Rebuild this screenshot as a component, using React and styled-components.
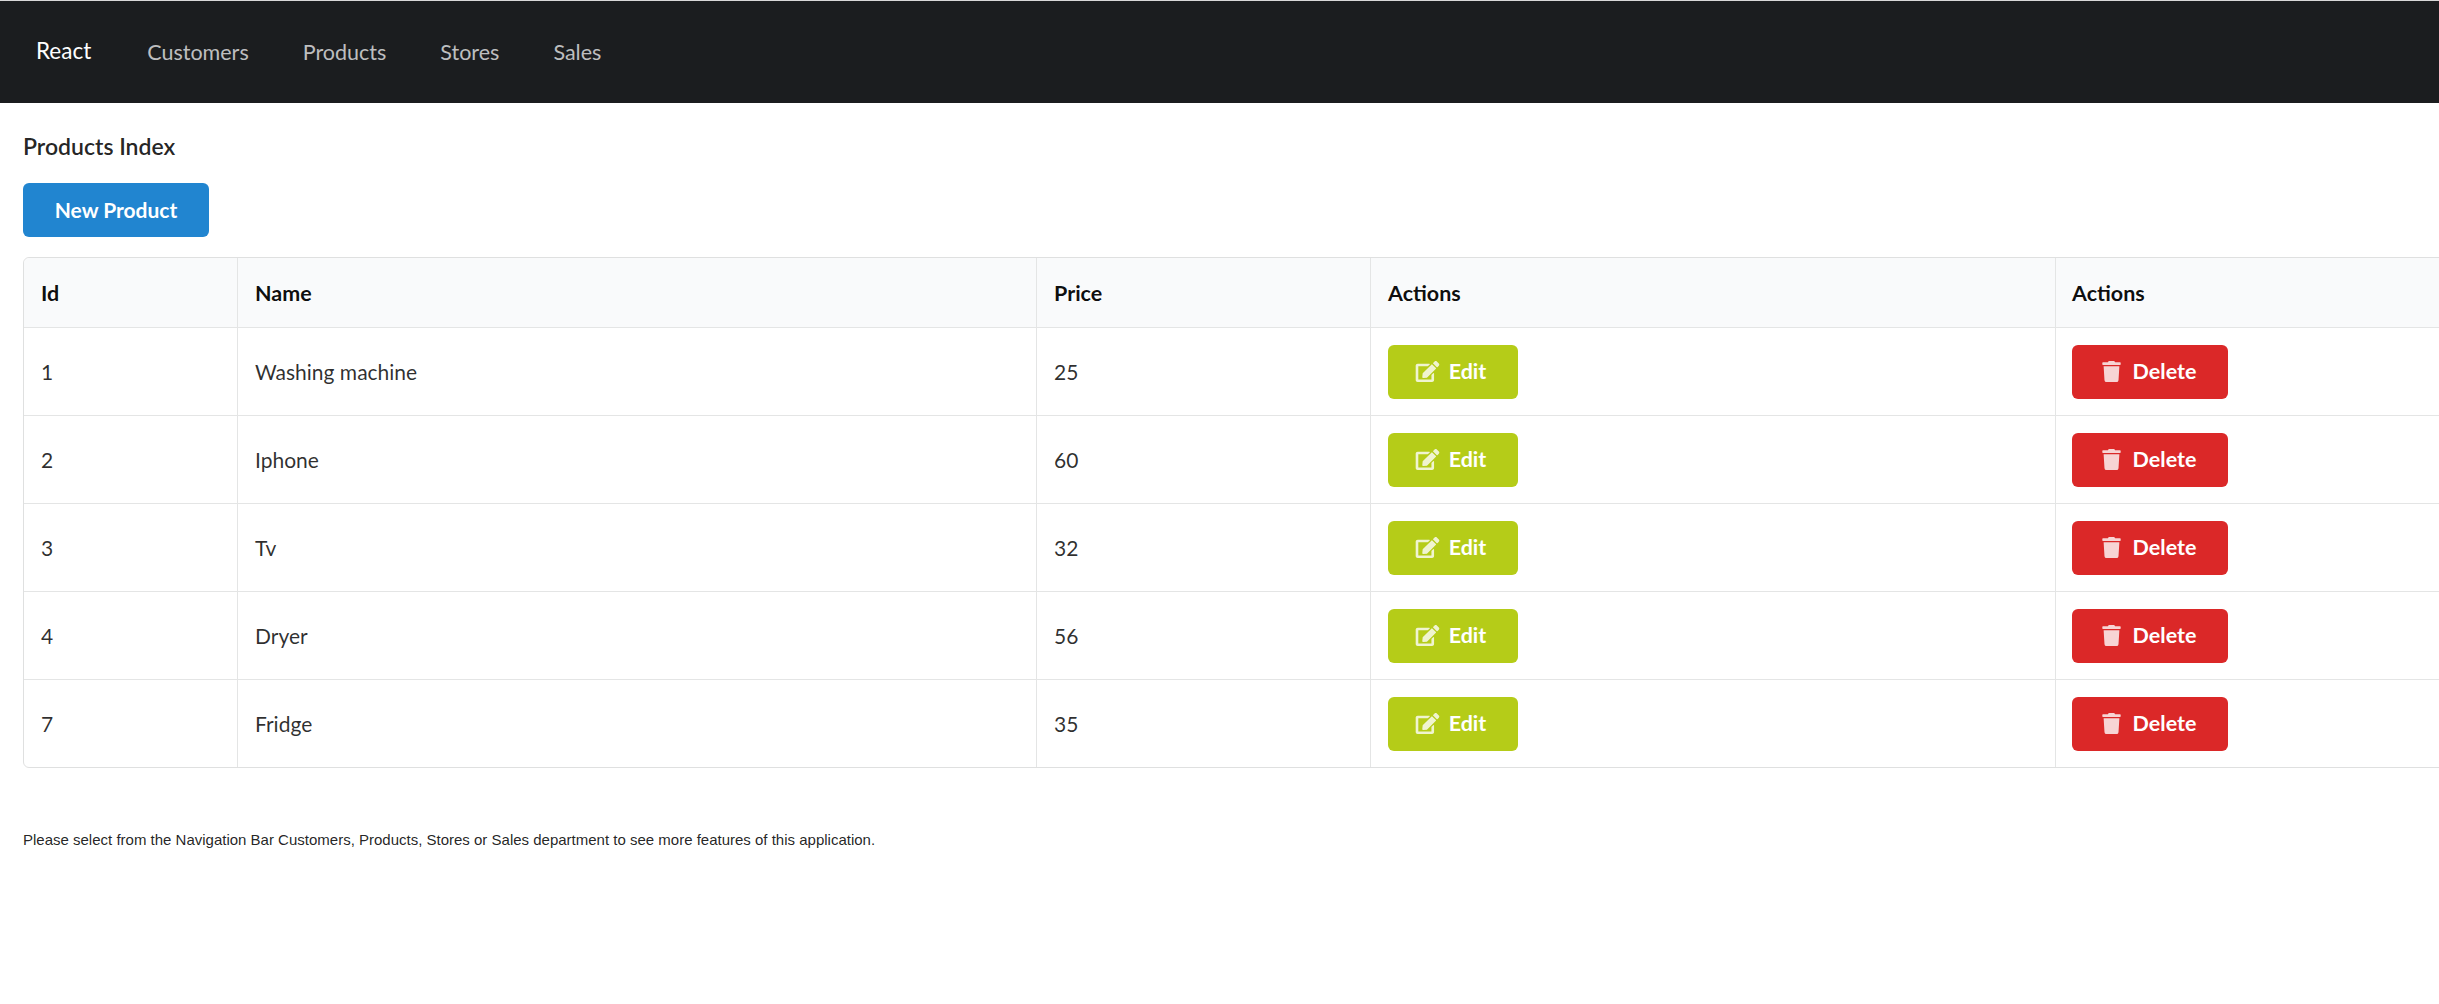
import React from 'react';
import styled, { createGlobalStyle } from 'styled-components';
import { FaEdit, FaTrash } from 'react-icons/fa';

const GlobalStyle = createGlobalStyle`
  html, body {
    margin: 0;
    padding: 0;
    background: #fff;
    overflow-x: hidden;
  }
  body {
    font-family: Lato, "Liberation Sans", sans-serif;
    font-size: 21px;
    line-height: 30px;
    color: rgba(0, 0, 0, 0.82);
  }
`;

const Navbar = styled.nav`
  height: 102px;
  border-top: 1px solid #d8d8d8;
  background: #1b1d1f;
  display: flex;
  align-items: center;
  padding-left: 36px;
`;

const Brand = styled.a`
  color: #fff;
  font-size: 22.5px;
  margin-right: 29px;
  margin-top: -3px;
`;

const NavLink = styled.a`
  color: rgba(255, 255, 255, 0.72);
  font-size: 21.5px;
  padding: 0 27px;
`;

const Main = styled.main`
  padding-left: 23px;
`;

const Title = styled.h4`
  margin: 0;
  padding-top: 28px;
  font-size: 23px;
  line-height: 30px;
  font-weight: 600;
  color: rgba(0, 0, 0, 0.87);
`;

const Button = styled.button`
  display: inline-flex;
  align-items: center;
  justify-content: center;
  height: 54px;
  width: ${p => p.$width}px;
  padding: 0 0 1px;
  border: 0;
  border-radius: 6px;
  background: ${p => p.$color};
  color: #fff;
  font-family: inherit;
  font-size: 21px;
  font-weight: 700;
`;

const NewButton = styled(Button)`
  margin-top: 22px;
  display: flex;
`;

const ActionButton = styled(Button)`
  font-size: 21.5px;
  padding-right: 5px;
  gap: 9px;
  svg {
    width: 25px;
    height: 21px;
    opacity: 0.8;
  }
`;

const Table = styled.table`
  margin-top: 20px;
  width: 2440px;
  table-layout: fixed;
  border-collapse: separate;
  border-spacing: 0;
  border: 1px solid #dfe0e0;
  border-radius: 6px;
`;

const Th = styled.th`
  height: 69px;
  padding: 0 17px;
  background: #f9fafb;
  text-align: left;
  font-size: 21.5px;
  font-weight: 700;
  color: rgba(0, 0, 0, 0.95);
  border-left: 1px solid #e4e5e5;
  &:first-child {
    border-left: 0;
    border-top-left-radius: 6px;
  }
  &:last-child {
    padding-left: 16px;
  }
`;

const Td = styled.td`
  height: 87px;
  padding: 0 17px;
  border-top: 1px solid #e4e5e5;
  border-left: 1px solid #e4e5e5;
  &:first-child {
    border-left: 0;
  }
  &:last-child {
    padding-left: 16px;
  }
`;

const Notice = styled.p`
  margin: 62px 0 0;
  font-family: "Liberation Sans", Arial, sans-serif;
  font-size: 15px;
  line-height: 20px;
  color: rgba(0, 0, 0, 0.87);
`;

const products = [
  { id: 1, name: 'Washing machine', price: 25 },
  { id: 2, name: 'Iphone', price: 60 },
  { id: 3, name: 'Tv', price: 32 },
  { id: 4, name: 'Dryer', price: 56 },
  { id: 7, name: 'Fridge', price: 35 },
];

function App() {
  return (
    <>
      <GlobalStyle />
      <Navbar>
        <Brand>React</Brand>
        <NavLink>Customers</NavLink>
        <NavLink>Products</NavLink>
        <NavLink>Stores</NavLink>
        <NavLink>Sales</NavLink>
      </Navbar>
      <Main>
        <Title>Products Index</Title>
        <NewButton $color="#2185d0" $width={186}>New Product</NewButton>
        <Table>
          <colgroup>
            <col style={{ width: 213 }} />
            <col style={{ width: 799 }} />
            <col style={{ width: 334 }} />
            <col style={{ width: 685 }} />
            <col />
          </colgroup>
          <thead>
            <tr>
              <Th>Id</Th>
              <Th>Name</Th>
              <Th>Price</Th>
              <Th>Actions</Th>
              <Th>Actions</Th>
            </tr>
          </thead>
          <tbody>
            {products.map(p => (
              <tr key={p.id}>
                <Td>{p.id}</Td>
                <Td>{p.name}</Td>
                <Td>{p.price}</Td>
                <Td>
                  <ActionButton $color="#b5cc18" $width={130}><FaEdit />Edit</ActionButton>
                </Td>
                <Td>
                  <ActionButton $color="#db2828" $width={156}><FaTrash />Delete</ActionButton>
                </Td>
              </tr>
            ))}
          </tbody>
        </Table>
        <Notice>Please select from the Navigation Bar Customers, Products, Stores or Sales department to see more features of this application.</Notice>
      </Main>
    </>
  );
}

export default App;
